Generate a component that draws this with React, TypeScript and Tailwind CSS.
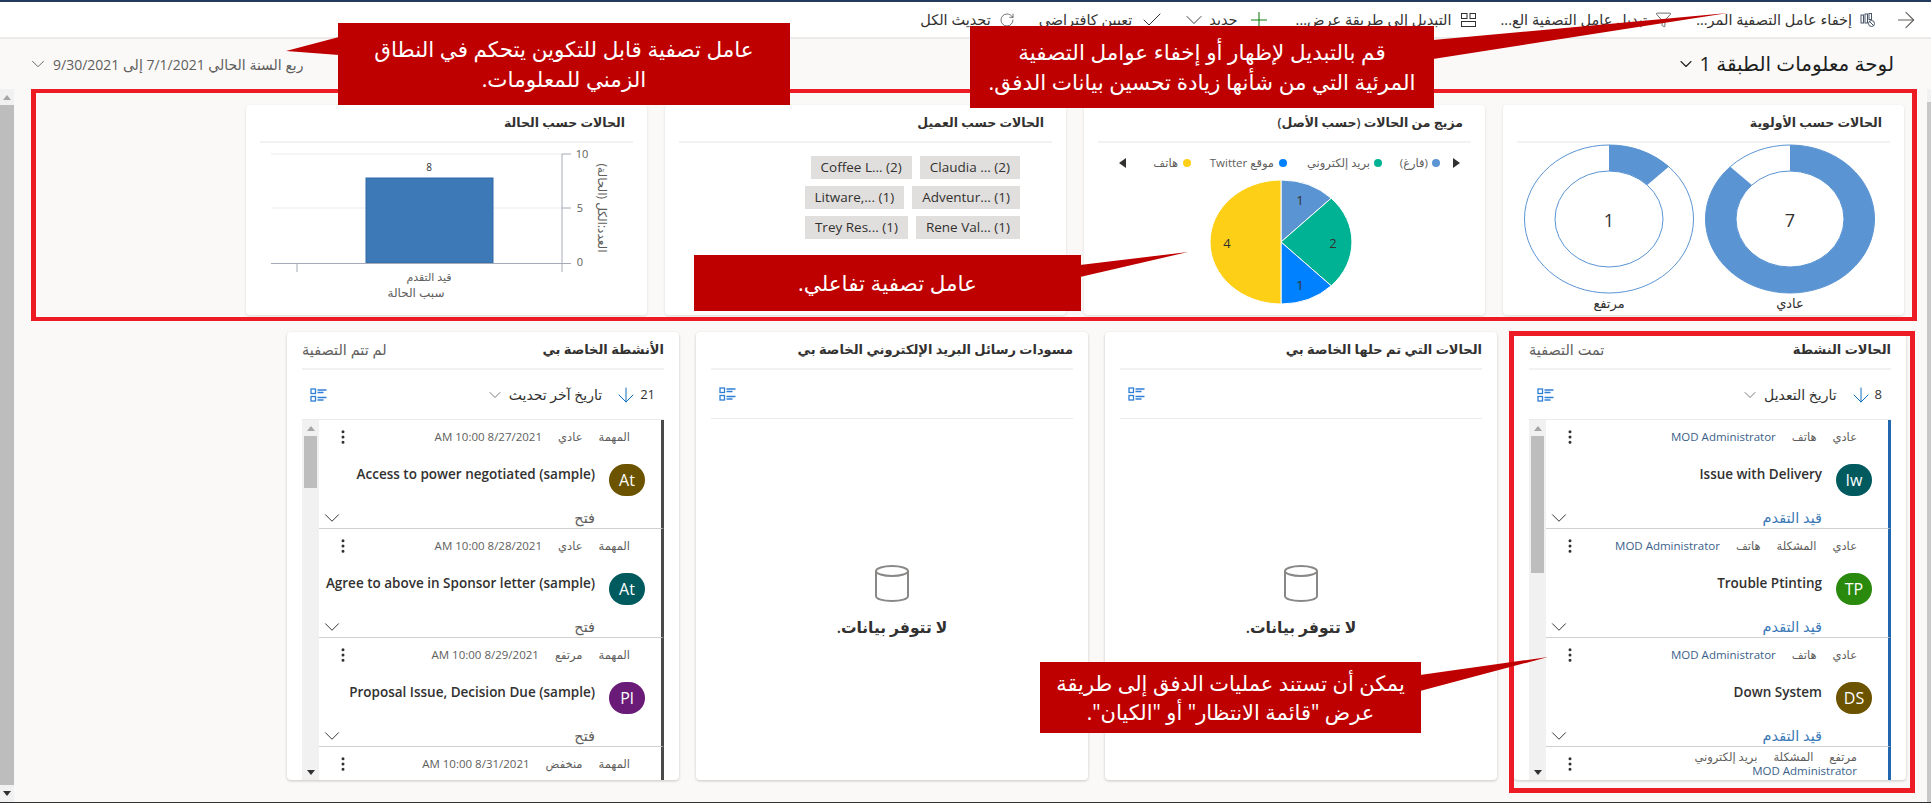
import { ArrowDown, ArrowRight, Check, ChevronDown, EllipsisVertical, Filter, Plus, RotateCw } from 'lucide-react'

type Item = {
  meta: string[]
  title: string
  initials: string
  color: string
  status: string
}

const caseItems: Item[] = [
  { meta: ['عادي', 'هاتف', 'MOD Administrator'], title: 'Issue with Delivery', initials: 'Iw', color: 'bg-[#005a5e]', status: 'قيد التقدم' },
  { meta: ['عادي', 'المشكلة', 'هاتف', 'MOD Administrator'], title: 'Trouble Ptinting', initials: 'TP', color: 'bg-[#2a8a0e]', status: 'قيد التقدم' },
  { meta: ['عادي', 'هاتف', 'MOD Administrator'], title: 'Down System', initials: 'DS', color: 'bg-[#6b5300]', status: 'قيد التقدم' },
  { meta: ['مرتفع', 'المشكلة', 'بريد إلكتروني', 'MOD Administrator'], title: '', initials: '', color: '', status: '' },
]

const activityItems: Item[] = [
  { meta: ['المهمة', 'عادي', '8/27/2021 10:00 AM'], title: 'Access to power negotiated (sample)', initials: 'At', color: 'bg-[#6b5300]', status: 'فتح' },
  { meta: ['المهمة', 'عادي', '8/28/2021 10:00 AM'], title: 'Agree to above in Sponsor letter (sample)', initials: 'At', color: 'bg-[#005a5e]', status: 'فتح' },
  { meta: ['المهمة', 'مرتفع', '8/29/2021 10:00 AM'], title: 'Proposal Issue, Decision Due (sample)', initials: 'Pl', color: 'bg-[#6a1b78]', status: 'فتح' },
  { meta: ['المهمة', 'منخفض', '8/31/2021 10:00 AM'], title: '', initials: '', color: '', status: '' },
]

const tagRows = [
  ['Claudia ... (2)', 'Coffee L... (2)'],
  ['Adventur... (1)', 'Litware,... (1)'],
  ['Rene Val... (1)', 'Trey Res... (1)'],
]

function ringPath(cx: number, cy: number, startLarge: boolean, endAngle: number) {
  const rx = 84.5
  const ry = 74
  const irx = 54
  const iry = 48
  const s = Math.sin((endAngle * Math.PI) / 180)
  const c = Math.cos((endAngle * Math.PI) / 180)
  const large = startLarge ? 1 : 0
  return `M${cx} ${cy - ry} A${rx} ${ry} 0 ${large} 1 ${cx + rx * s} ${cy - ry * c} L${cx + irx * s} ${cy - iry * c} A${irx} ${iry} 0 ${large} 0 ${cx} ${cy - iry} Z`
}

function ListIcon() {
  return (
    <svg width="18" height="14" viewBox="0 0 18 14" fill="none" stroke="#2f7fd6" strokeWidth="1.3">
      <rect x="1" y="1" width="4.5" height="4.5" />
      <rect x="1" y="8.5" width="4.5" height="4.5" />
      <path d="M7.5 2h9M7.5 4.5h6M7.5 9.5h9M7.5 12h6" />
    </svg>
  )
}

function BarsOffIcon() {
  return (
    <svg width="16" height="16" viewBox="0 0 16 16" fill="none" stroke="#4a5568" strokeWidth="1">
      <rect x="1" y="3" width="2.5" height="8" />
      <rect x="5" y="2" width="2.5" height="9" />
      <rect x="9" y="1.5" width="2.5" height="6" />
      <circle cx="11.5" cy="11.5" r="3" />
      <path d="M9.5 9.5l4 4" />
    </svg>
  )
}

function LayoutIcon() {
  return (
    <svg width="17" height="16" viewBox="0 0 17 16" fill="none" stroke="#323130" strokeWidth="1">
      <rect x="1.5" y="1.5" width="5.5" height="5" />
      <rect x="10" y="1.5" width="5.5" height="5" />
      <rect x="1.5" y="9.5" width="14" height="5" />
    </svg>
  )
}

function Cylinder() {
  return (
    <svg width="34" height="37" viewBox="0 0 34 37" fill="none" stroke="#8a8886" strokeWidth="2">
      <ellipse cx="17" cy="6" rx="16" ry="5" />
      <path d="M1 6v25c0 3 7 5 16 5s16-2 16-5V6" />
    </svg>
  )
}

function ChartCard({ title, children }: { title: string; children: React.ReactNode }) {
  return (
    <div className="w-[401px] h-[210px] shrink-0 bg-white rounded-[4px] shadow-[0_1px_3px_rgba(0,0,0,0.12)] px-[14px] flex flex-col">
      <div className="h-[38px] shrink-0 flex items-center pr-[8px] border-b-2 border-[#f3f2f1] text-[12.5px] font-semibold text-[#323130]">{title}</div>
      {children}
    </div>
  )
}

function ListScrollbar({ thumb }: { thumb: string }) {
  return (
    <div className="w-[17px] shrink-0 bg-[#f1f1f1] flex flex-col items-center">
      <div className="h-[16px] w-full flex items-center justify-center">
        <div className="w-0 h-0 border-x-[4px] border-x-transparent border-b-[5px] border-b-[#a6a6a6]" />
      </div>
      <div className={`w-[13px] bg-[#bdbdbd] ${thumb}`} />
      <div className="mt-auto h-[16px] w-full flex items-center justify-center">
        <div className="w-0 h-0 border-x-[4px] border-x-transparent border-t-[5px] border-t-[#323130]" />
      </div>
    </div>
  )
}

function Row({ item, accent, metaClass, statusClass }: { item: Item; accent: string; metaClass: (i: number) => string; statusClass: string }) {
  return (
    <div className={`h-[109px] shrink-0 border-b border-[#d2d0ce] border-r-[3px] ${accent} flex flex-col`}>
      <div className="h-[34px] shrink-0 flex items-center justify-between pr-[31px] pl-[15px]">
        <div className="max-w-[272px] flex flex-wrap items-center gap-x-[16px] text-[11.5px] leading-[14px]">
          {item.meta.map((m, i) => (
            <span key={i} className={metaClass(i) + ' whitespace-nowrap'}>{m}</span>
          ))}
        </div>
        <EllipsisVertical size={18} strokeWidth={2} className="text-[#323130]" />
      </div>
      {item.title && (
        <>
          <div className="mt-[10px] h-[32px] shrink-0 flex items-start pr-[16px] gap-[14px]">
            <div className={`w-[36px] h-[32px] shrink-0 rounded-full ${item.color} text-white text-[16px] flex items-center justify-center`}>{item.initials}</div>
            <div className="text-[13.5px] leading-[20px] font-semibold text-[#323130] whitespace-nowrap">{item.title}</div>
          </div>
          <div className="mt-[12px] h-[20px] shrink-0 flex items-center justify-between pr-[66px]">
            <span className={`text-[14.5px] ${statusClass}`}>{item.status}</span>
            <ChevronDown size={26} strokeWidth={0.9} className="text-[#323130]" />
          </div>
        </>
      )}
    </div>
  )
}

function StreamCard({ title, filterLabel, children }: { title: string; filterLabel?: string; children: React.ReactNode }) {
  return (
    <div className="w-[392px] h-[448px] shrink-0 bg-white rounded-[4px] shadow-[0_1px_3px_rgba(0,0,0,0.2)] px-[15px] flex flex-col overflow-hidden">
      <div className="h-[38px] shrink-0 flex items-center justify-between border-b-2 border-[#f3f2f1]">
        <span className="text-[13px] font-semibold text-[#323130]">{title}</span>
        {filterLabel && <span className="text-[14.5px] text-[#605e5c]">{filterLabel}</span>}
      </div>
      {children}
    </div>
  )
}

function SortRow({ count, label }: { count: string; label: string }) {
  return (
    <div className="h-[49px] shrink-0 flex items-center justify-between pr-[9px] pl-[8px]">
      <div className="flex items-center">
        <span className="text-[13px] text-[#323130]">{count}</span>
        <ArrowDown size={24} strokeWidth={1} className="text-[#0f6cbd] mr-[2px]" />
        <span className="text-[14px] text-[#323130] mr-[12px]">{label}</span>
        <ChevronDown size={20} strokeWidth={1} className="text-[#605e5c] mr-[4px]" />
      </div>
      <ListIcon />
    </div>
  )
}

function EmptyCard({ title }: { title: string }) {
  return (
    <StreamCard title={title}>
      <div className="h-[49px] shrink-0 flex items-center justify-end pl-[8px] border-b border-[#edebe9]">
        <ListIcon />
      </div>
      <div className="flex-1 flex flex-col items-center justify-center pt-[6px]">
        <Cylinder />
        <div className="mt-[14px] text-[15.5px] font-semibold text-[#323130]">لا تتوفر بيانات.</div>
      </div>
    </StreamCard>
  )
}

function Command({ icon, label }: { icon?: React.ReactNode; label: string }) {
  return (
    <div className="flex items-center gap-[8px] whitespace-nowrap text-[14.5px] text-[#323130]">
      {icon}
      <span>{label}</span>
    </div>
  )
}

export default function App() {
  return (
    <div dir="rtl" className="relative w-[1931px] h-[803px] overflow-hidden bg-[#faf9f8] flex flex-col [font-family:'Open_Sans','DejaVu_Sans',sans-serif]">
      <div className="h-[2px] shrink-0 bg-[#243a5e]" />

      {/* command bar */}
      <div className="h-[37px] shrink-0 bg-white border-b-2 border-[#edebe9] flex items-center pr-[12px] gap-[17px]">
        <ArrowRight size={26} strokeWidth={1} className="text-[#605e5c] shrink-0" />
        <div className="flex items-center gap-[24px]">
          <Command icon={<BarsOffIcon />} label="إخفاء عامل التصفية المر..." />
          <Command icon={<Filter size={17} strokeWidth={1} />} label="تبديل عامل التصفية الع..." />
          <Command icon={<LayoutIcon />} label="التبديل إلى طريقة عرض..." />
          <Command icon={<Plus size={26} strokeWidth={1} className="text-[#107c10]" />} label="جديد" />
          <ChevronDown size={28} strokeWidth={0.8} className="text-[#323130] mr-[-23px] ml-[-8px]" />
          <Command icon={<Check size={24} strokeWidth={1} />} label="تعيين كافتراضي" />
          <Command icon={<RotateCw size={16} strokeWidth={1} />} label="تحديث الكل" />
        </div>
      </div>

      {/* title row */}
      <div className="h-[50px] shrink-0 flex items-center justify-between pr-[37px] pl-[27px]">
        <div className="flex items-center gap-[4px] text-[20px] text-[#201f1e]">
          <span>لوحة معلومات الطبقة 1</span>
          <ChevronDown size={20} strokeWidth={1.3} />
        </div>
        <div className="flex items-center gap-[4px] text-[14px] text-[#605e5c]">
          <span>ربع السنة الحالي 7/1/2021 إلى 9/30/2021</span>
          <ChevronDown size={22} strokeWidth={1} />
        </div>
      </div>

      <div className="flex-1 flex min-h-0 border-b border-[#323130]">
        {/* right page scrollbar */}
        <div className="w-[4px] shrink-0 bg-[#f1f1f1] flex flex-col">
          <div className="h-[13px] shrink-0" />
          <div className="flex-1 bg-[#c8c8c8]" />
        </div>

        <div className="flex-1 min-w-0 flex flex-col">
          {/* visual filters */}
          <div className="mr-[10px] ml-[17px] h-[232px] shrink-0 border-y-4 border-x-[5px] border-[#ed1c24] pt-[12px] pr-[8px] flex gap-[18px]">
            <ChartCard title="الحالات حسب الأولوية">
              <svg viewBox="1517 143 373 172" className="w-[373px] h-[172px]">
                <ellipse cx="1790" cy="219" rx="84.5" ry="74" fill="none" stroke="#5b94d3" strokeWidth="1" />
                <ellipse cx="1790" cy="219" rx="54" ry="48" fill="none" stroke="#5b94d3" strokeWidth="1" />
                <path d={ringPath(1790, 219, true, 315)} fill="#5b94d3" />
                <ellipse cx="1609" cy="219" rx="84.5" ry="74" fill="none" stroke="#5b94d3" strokeWidth="1" />
                <ellipse cx="1609" cy="219" rx="54" ry="48" fill="none" stroke="#5b94d3" strokeWidth="1" />
                <path d={ringPath(1609, 219, false, 45)} fill="#5b94d3" />
                <text x="1790" y="227" textAnchor="middle" fontSize="18" fill="#323130">7</text>
                <text x="1609" y="227" textAnchor="middle" fontSize="18" fill="#323130">1</text>
                <text x="1790" y="308" textAnchor="middle" fontSize="13" fill="#323130">عادي</text>
                <text x="1609" y="308" textAnchor="middle" fontSize="13" fill="#323130">مرتفع</text>
              </svg>
            </ChartCard>

            <ChartCard title="مزيج من الحالات (حسب الأصل)">
              <svg viewBox="1097 143 373 172" className="w-[373px] h-[172px]">
                <path d="M1452 158v10l7-5z" fill="#323130" />
                <circle cx="1435" cy="163" r="4" fill="#5b94d3" />
                <text x="1427" y="167" textAnchor="start" fontSize="11.5" fill="#605e5c">(فارغ)</text>
                <circle cx="1377" cy="163" r="4" fill="#00b294" />
                <text x="1369" y="167" textAnchor="start" fontSize="11.5" fill="#605e5c">بريد إلكتروني</text>
                <circle cx="1282" cy="163" r="4" fill="#0081ff" />
                <text x="1273" y="167" textAnchor="start" fontSize="11.5" fill="#605e5c">موقع Twitter</text>
                <circle cx="1186" cy="163" r="4" fill="#fdd017" />
                <text x="1177" y="167" textAnchor="start" fontSize="11.5" fill="#605e5c">هاتف</text>
                <path d="M1125 158v10l-7-5z" fill="#323130" />
                <g stroke="#ffffff" strokeWidth="1">
                  <path d="M1280 242V180A71 62 0 0 1 1330.2 198.2Z" fill="#5b94d3" />
                  <path d="M1280 242L1330.2 198.2A71 62 0 0 1 1330.2 285.8Z" fill="#00b294" />
                  <path d="M1280 242L1330.2 285.8A71 62 0 0 1 1280 304Z" fill="#0081ff" />
                  <path d="M1280 242V304A71 62 0 0 1 1280 180Z" fill="#fdd017" />
                </g>
                <text x="1299" y="205" textAnchor="middle" fontSize="13" fill="#323130">1</text>
                <text x="1332" y="248" textAnchor="middle" fontSize="13" fill="#323130">2</text>
                <text x="1299" y="290" textAnchor="middle" fontSize="13" fill="#323130">1</text>
                <text x="1226" y="248" textAnchor="middle" fontSize="13" fill="#323130">4</text>
              </svg>
            </ChartCard>

            <ChartCard title="الحالات حسب العميل">
              <div className="pt-[13px] pr-[32px] flex flex-col gap-[7px]">
                {tagRows.map((row) => (
                  <div key={row[0]} className="flex gap-[8px]">
                    {row.map((t) => (
                      <span key={t} dir="ltr" className="h-[23px] px-[10px] flex items-center bg-[#e1dfdd] text-[13.5px] text-[#323130] whitespace-nowrap">{t}</span>
                    ))}
                  </div>
                ))}
              </div>
            </ChartCard>

            <ChartCard title="الحالات حسب الحالة">
              <svg viewBox="258 143 373 172" className="w-[373px] h-[172px]">
                <path d="M269 154H560M269 208H560" stroke="#edebe9" strokeWidth="1" />
                <rect x="364" y="178" width="127" height="85" fill="#3d79b6" stroke="#2f6aa8" />
                <path d="M269 263.5H569M560 154V272M560 154H569M560 208H569M295 263V272" stroke="#a6a9b8" strokeWidth="1" fill="none" />
                <text x="580" y="158" textAnchor="middle" fontSize="11" fill="#605e5c">10</text>
                <text x="578" y="212" textAnchor="middle" fontSize="11" fill="#605e5c">5</text>
                <text x="578" y="266" textAnchor="middle" fontSize="11" fill="#605e5c">0</text>
                <text x="427" y="171" textAnchor="middle" fontSize="10" fill="#323130">8</text>
                <text x="427" y="281" textAnchor="middle" fontSize="11" fill="#605e5c">قيد التقدم</text>
                <text x="414" y="297" textAnchor="middle" fontSize="12" fill="#605e5c">سبب الحالة</text>
                <text x="596" y="208" textAnchor="middle" fontSize="12" fill="#605e5c" transform="rotate(90 596 208)">العدد:الكل (الحالة)</text>
              </svg>
            </ChartCard>
          </div>

          {/* streams */}
          <div className="mt-[11px] pr-[21px] flex gap-[17px]">
            <div className="relative">
              <StreamCard title="الحالات النشطة" filterLabel="تمت التصفية">
                <SortRow count="8" label="تاريخ التعديل" />
                <div className="flex-1 min-h-0 flex border-t border-[#edebe9]">
                  <div className="flex-1 min-w-0 flex flex-col overflow-hidden">
                    {caseItems.map((it, i) => (
                      <Row
                        key={i}
                        item={it}
                        accent="border-r-[#2266b0]"
                        statusClass="text-[#3b79b7]"
                        metaClass={(m) => (it.meta[m] === 'MOD Administrator' ? 'text-[#3b5f8a]' : 'text-[#605e5c]')}
                      />
                    ))}
                  </div>
                  <ListScrollbar thumb="h-[137px]" />
                </div>
              </StreamCard>
              <div className="absolute top-[-1px] right-[-9px] left-[-5px] bottom-[-13px] border-[5px] border-[#ed1c24] pointer-events-none" />
            </div>

            <EmptyCard title="الحالات التي تم حلها الخاصة بي" />
            <EmptyCard title="مسودات رسائل البريد الإلكتروني الخاصة بي" />

            <StreamCard title="الأنشطة الخاصة بي" filterLabel="لم تتم التصفية">
              <SortRow count="21" label="تاريخ آخر تحديث" />
              <div className="flex-1 min-h-0 flex border-t border-[#edebe9]">
                <div className="flex-1 min-w-0 flex flex-col overflow-hidden">
                  {activityItems.map((it, i) => (
                    <Row
                      key={i}
                      item={it}
                      accent="border-r-[#4a4a4a]"
                      statusClass="text-[#605e5c]"
                      metaClass={() => 'text-[#605e5c]'}
                    />
                  ))}
                </div>
                <ListScrollbar thumb="h-[52px]" />
              </div>
            </StreamCard>
          </div>
        </div>

        {/* left page scrollbar */}
        <div className="w-[14px] shrink-0 bg-[#f1f1f1] flex flex-col items-center">
          <div className="h-[16px] w-full flex items-center justify-center">
            <div className="w-0 h-0 border-x-[4px] border-x-transparent border-b-[5px] border-b-[#a6a6a6]" />
          </div>
          <div className="flex-1 w-full bg-[#bdbdbd]" />
          <div className="h-[17px] w-full flex items-center justify-center">
            <div className="w-0 h-0 border-x-[4px] border-x-transparent border-t-[5px] border-t-[#323130]" />
          </div>
        </div>
      </div>

      {/* callouts over the page */}
      <svg className="absolute inset-0 pointer-events-none" width="1931" height="803" viewBox="0 0 1931 803">
        <polygon points="339,37 286,51 339,55" fill="#bf0000" />
        <polygon points="1433,40 1728,13 1433,59" fill="#bf0000" />
        <polygon points="1080,265 1188,252 1080,277" fill="#bf0000" />
        <polygon points="1420,675 1548,657 1420,691" fill="#bf0000" />
      </svg>
      <div className="absolute left-[338px] top-[23px] w-[452px] h-[82px] bg-[#bf0000] text-white text-[21.5px] leading-[30px] text-center flex items-center justify-center">
        <span>عامل تصفية قابل للتكوين يتحكم في النطاق<br />الزمني للمعلومات.</span>
      </div>
      <div className="absolute left-[970px] top-[26px] w-[464px] h-[82px] bg-[#bf0000] text-white text-[21.5px] leading-[30px] text-center flex items-center justify-center">
        <span>قم بالتبديل لإظهار أو إخفاء عوامل التصفية<br />المرئية التي من شأنها زيادة تحسين بيانات الدفق.</span>
      </div>
      <div className="absolute left-[694px] top-[255px] w-[387px] h-[56px] bg-[#bf0000] text-white text-[21.5px] text-center flex items-center justify-center">
        عامل تصفية تفاعلي.
      </div>
      <div className="absolute left-[1040px] top-[662px] w-[381px] h-[71px] bg-[#bf0000] text-white text-[21px] leading-[29px] text-center flex items-center justify-center">
        <span>يمكن أن تستند عمليات الدفق إلى طريقة<br />عرض "قائمة الانتظار" أو "الكيان".</span>
      </div>
    </div>
  )
}
